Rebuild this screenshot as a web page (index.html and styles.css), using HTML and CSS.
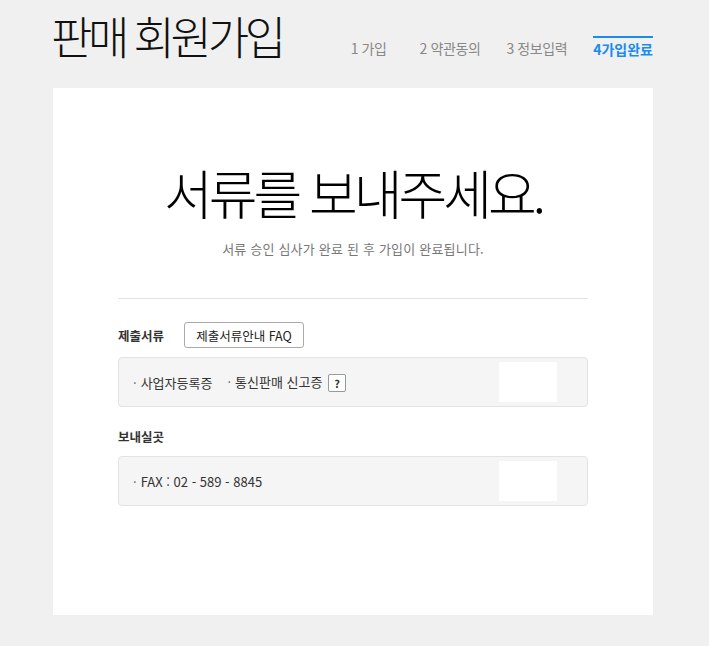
FILE: index.html
```html
<!DOCTYPE html>
<html lang="ko">
<head>
<meta charset="utf-8">
<title>판매 회원가입</title>
<link rel="stylesheet" href="styles.css">
</head>
<body>
<div class="wrap">
  <header class="head">
    <h1 class="title">판매 회원가입</h1>
    <ol class="steps">
      <li class="step">1 가입</li>
      <li class="step step-2">2 약관동의</li>
      <li class="step">3 정보입력</li>
      <li class="step step-on">4가입완료</li>
    </ol>
  </header>
  <main class="card">
    <h2 class="big">서류를 보내주세요.</h2>
    <p class="sub">서류 승인 심사가 완료 된 후 가입이 완료됩니다.</p>
    <hr class="divider">
    <section class="sec sec-docs">
      <div class="sec-head">
        <h3 class="label">제출서류</h3>
        <button class="faq" type="button">제출서류안내 FAQ</button>
      </div>
      <div class="box">
        <span class="item">사업자등록증</span>
        <span class="item">통신판매 신고증 <span class="qmark">?</span></span>
        <span class="patch"></span>
      </div>
    </section>
    <section class="sec sec-addr">
      <div class="sec-head">
        <h3 class="label">보내실곳</h3>
      </div>
      <div class="box">
        <span class="item">FAX : 02 - 589 - 8845</span>
        <span class="patch"></span>
      </div>
    </section>
  </main>
</div>
</body>
</html>
```
FILE: styles.css
```css
html, body {
  margin: 0;
  padding: 0;
  background: #f0f0f0;
}
body {
  font-family: "Noto Sans CJK KR", "Noto Sans", sans-serif;
  color: #333;
}
.wrap {
  width: 600px;
  margin-left: 53px;
  height: 646px;
}
.head {
  height: 88px;
  display: flex;
  align-items: flex-start;
  justify-content: space-between;
}
.title {
  margin: 4px 0 0 -2px;
  font-size: 45px;
  font-weight: 300;
  letter-spacing: -4.3px;
  color: #111;
  line-height: 64px;
}
.steps {
  list-style: none;
  margin: 36px 0 0 0;
  padding: 0;
  display: flex;
}
.step {
  font-size: 14px;
  color: #888;
  letter-spacing: -0.4px;
  padding-top: 2px;
  line-height: 20px;
  margin-left: 26px;
}
.step:first-child { margin-left: 0; }
.step-2 { margin-left: 33px; }
.step-on {
  color: #1a8cf0;
  font-weight: 700;
  border-top: 2px solid #1a8cf0;
  padding-top: 1px;
  letter-spacing: 0;
}
.card {
  background: #fff;
  height: 527px;
  padding: 0 65px;
  box-sizing: border-box;
  overflow: hidden;
}
.big {
  margin: 0;
  padding-top: 66px;
  text-align: center;
  font-size: 53px;
  font-weight: 300;
  letter-spacing: -4px;
  color: #000;
  line-height: 76px;
}
.sub {
  margin: 10px 0 0;
  text-align: center;
  font-size: 13px;
  letter-spacing: 0.2px;
  color: #777;
  line-height: 18px;
}
.divider {
  border: 0;
  border-top: 1px solid #e5e5e5;
  margin: 40px 0 0;
  height: 0;
}
.sec-head {
  display: flex;
  align-items: center;
  gap: 20px;
}
.sec-docs .sec-head {
  margin-top: 23px;
  height: 26px;
}
.sec-addr .sec-head {
  margin-top: 20px;
  height: 18px;
}
.label {
  margin: 0;
  font-size: 12.5px;
  font-weight: 700;
  color: #333;
}
.faq {
  font-family: inherit;
  font-size: 12.5px;
  color: #222;
  background: #fff;
  border: 1px solid #aaa;
  border-radius: 3px;
  height: 26px;
  padding: 0 6px;
  width: 120px;
}
.box {
  position: relative;
  height: 50px;
  box-sizing: border-box;
  background: #f5f5f5;
  border: 1px solid #e3e3e3;
  border-radius: 4px;
  display: flex;
  align-items: center;
  padding-left: 14px;
  gap: 15px;
  font-size: 13px;
  color: #333;
}
.sec-docs .box { margin-top: 9px; }
.sec-addr .box { margin-top: 11px; }
.item::before {
  content: "·";
  margin-right: 4px;
  color: #666;
}
.qmark {
  display: inline-block;
  width: 16px;
  height: 16px;
  line-height: 16px;
  text-align: center;
  border: 1px solid #999;
  border-radius: 2px;
  font-size: 11px;
  font-weight: 700;
  background: #fff;
  vertical-align: middle;
  margin-left: 2px;
}
.patch {
  position: absolute;
  left: 380px;
  top: 4px;
  width: 58px;
  height: 40px;
  background: #fff;
}
```
